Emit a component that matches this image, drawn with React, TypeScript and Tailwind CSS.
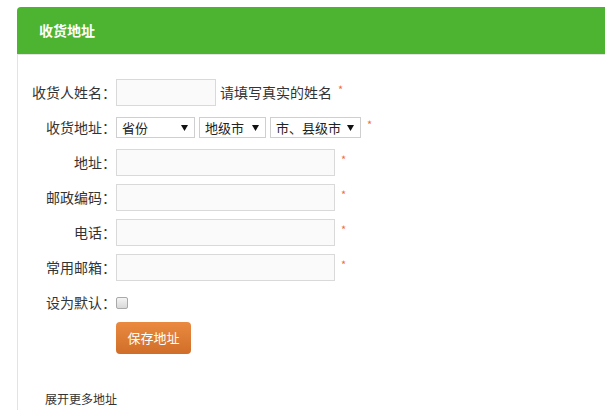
import React from 'react'

const font = { fontFamily: '"Noto Sans CJK SC", "Microsoft YaHei", sans-serif' }

function Star() {
  return <span className="ml-[6px] -mt-[6px] text-[11px] leading-none text-[#f46b3c]">*</span>
}

function Arrow() {
  return (
    <svg width="7" height="6" viewBox="0 0 7 6" className="shrink-0">
      <path d="M0 0h7L3.5 6z" fill="#111" />
    </svg>
  )
}

function FakeSelect({ label, width }: { label: string; width: string }) {
  return (
    <div className={`flex h-[21px] items-center justify-between border border-[#cfcfcf] bg-white pl-[5px] pr-[6px] text-[13px] text-[#222] ${width}`}>
      <span>{label}</span>
      <Arrow />
    </div>
  )
}

function Row({ label, children }: { label: string; children: React.ReactNode }) {
  return (
    <div className="flex h-[35px] items-center">
      <div className="w-[98px] text-right text-[14px] text-[#333]">{label}：</div>
      {children}
    </div>
  )
}

function TextInput({ width }: { width: string }) {
  return <input className={`h-[27px] border border-[#d9d9d9] bg-[#fafafa] outline-none ${width}`} />
}

export default function App() {
  const fields = ['地址', '邮政编码', '电话', '常用邮箱']
  return (
    <div className="h-[410px] overflow-hidden bg-white pl-[17px] pt-[7px]" style={font}>
      <div className="w-[620px]">
        <div className="flex h-[47px] items-center rounded-tl-[4px] bg-[#4cb431] pl-[22px] text-[14px] font-bold text-white">
          收货地址
        </div>
        <div className="h-[400px] border-l border-t border-[#e3e3e3] pt-[20px]">
          <Row label="收货人姓名">
            <TextInput width="w-[100px]" />
            <span className="ml-[4px] text-[14px] text-[#333]">请填写真实的姓名</span>
            <Star />
          </Row>
          <Row label="收货地址">
            <div className="flex gap-[4px]">
              <FakeSelect label="省份" width="w-[79px]" />
              <FakeSelect label="地级市" width="w-[67px]" />
              <FakeSelect label="市、县级市" width="w-[91px]" />
            </div>
            <Star />
          </Row>
          {fields.map(f => (
            <Row key={f} label={f}>
              <TextInput width="w-[219px]" />
              <Star />
            </Row>
          ))}
          <Row label="设为默认">
            <div className="h-[12px] w-[12px] rounded-[2px] border border-[#a9a9a9] bg-gradient-to-b from-[#f4f4f4] to-[#d8d8d8]" />
          </Row>
          <div className="pl-[98px]">
            <button className="mt-[2px] h-[32px] w-[75px] rounded-[4px] bg-gradient-to-b from-[#ea8a3f] to-[#d06e29] text-[13px] text-white">
              保存地址
            </button>
          </div>
          <div className="mt-[36px] pl-[27px] text-[12px] text-[#333]">展开更多地址</div>
        </div>
      </div>
    </div>
  )
}
